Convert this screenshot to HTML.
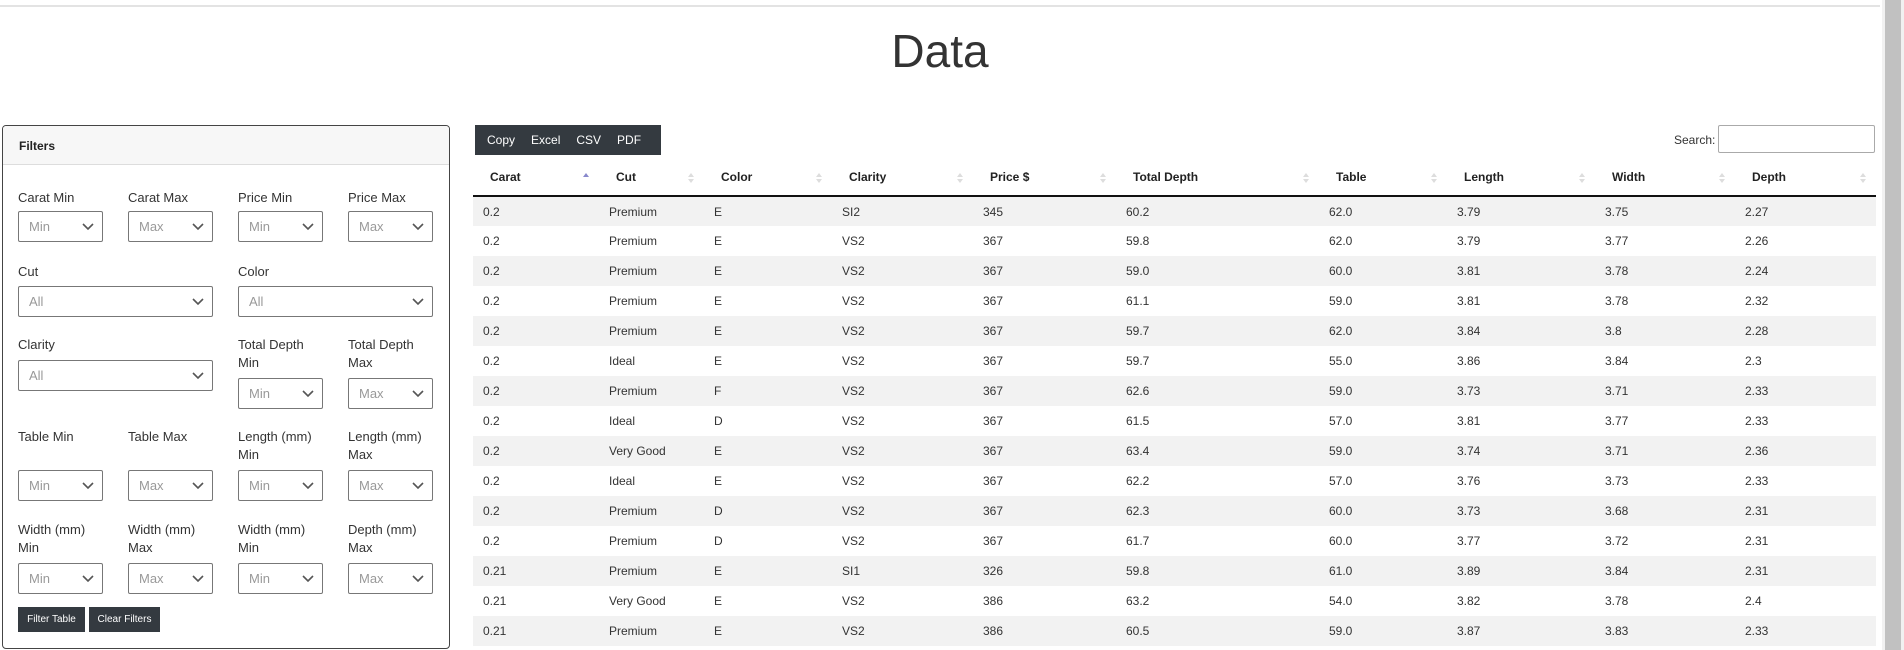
<!DOCTYPE html>
<html><head><meta charset="utf-8"><style>
*{box-sizing:border-box;margin:0;padding:0}
body{width:1904px;height:650px;overflow:hidden;background:#fff;font-family:"Liberation Sans",Arial,sans-serif;color:#212529;position:relative}
.topline{position:absolute;left:0;top:5px;width:1880px;height:2px;background:#e3e3e3}
.sb{position:absolute;right:0;top:0;width:22px;height:650px;background:#f1f1f1}
.sb div{position:absolute;left:3px;right:3px;top:0;bottom:0;background:#c1c1c1}
h1{position:absolute;left:0;width:1880px;top:24px;text-align:center;font-weight:400;font-size:46px;color:#333}
.card{position:absolute;left:2px;top:125px;width:448px;height:524px;border:1px solid #444;border-radius:4px;overflow:hidden}
.card .hd{height:39px;background:#f7f7f7;border-bottom:1px solid #ddd;font-weight:bold;font-size:12px;padding:13px 0 0 16px;color:#222}
.lbl{position:absolute;font-size:13px;line-height:18px;color:#333}
.sel{position:absolute;height:31px;border:1px solid #777;border-radius:2px;font-size:13px;color:#999;padding:7px 0 0 10px;background:#fff}
.sel svg{position:absolute;right:8px;top:11px}
.btn{position:absolute;background:#343a40;color:#fff;font-size:10px;height:25px;line-height:25px;text-align:center;white-space:nowrap}
.bar{position:absolute;left:475px;top:125px;width:186px;height:30px;background:#343a40;color:#fff;font-size:12px;line-height:30px;white-space:nowrap}
.bar span{margin-left:12px;margin-right:4px}
.search{position:absolute;left:1674px;top:133px;font-size:12px;color:#333}
.sinput{position:absolute;left:1718px;top:125px;width:157px;height:28px;border:1px solid #aaa;border-radius:2px}
table{position:absolute;left:473px;top:159px;width:1403px;border-collapse:collapse;font-size:12px;color:#333;table-layout:fixed}
th{text-align:left;font-weight:bold;height:37px;padding-left:17px;border-bottom:2px solid #111;position:relative;color:#222}
th i{position:absolute;right:10px;top:13px;width:6px;height:12px;font-style:normal}
td{height:30px;padding-left:10px}
tbody tr:nth-child(odd){background:#f2f2f2}
</style></head><body>
<div class="topline"></div>
<div class="sb"><div></div></div>
<h1>Data</h1>
<div class="card"><div class="hd">Filters</div></div>
<div class="lbl" style="left:18px;top:189px">Carat Min</div>
<div class="lbl" style="left:128px;top:189px">Carat Max</div>
<div class="lbl" style="left:238px;top:189px">Price Min</div>
<div class="lbl" style="left:348px;top:189px">Price Max</div>
<div class="lbl" style="left:18px;top:263px">Cut</div>
<div class="lbl" style="left:238px;top:263px">Color</div>
<div class="lbl" style="left:18px;top:336px">Clarity</div>
<div class="lbl" style="left:238px;top:336px">Total Depth<br>Min</div>
<div class="lbl" style="left:348px;top:336px">Total Depth<br>Max</div>
<div class="lbl" style="left:18px;top:428px">Table Min</div>
<div class="lbl" style="left:128px;top:428px">Table Max</div>
<div class="lbl" style="left:238px;top:428px">Length (mm)<br>Min</div>
<div class="lbl" style="left:348px;top:428px">Length (mm)<br>Max</div>
<div class="lbl" style="left:18px;top:521px">Width (mm)<br>Min</div>
<div class="lbl" style="left:128px;top:521px">Width (mm)<br>Max</div>
<div class="lbl" style="left:238px;top:521px">Width (mm)<br>Min</div>
<div class="lbl" style="left:348px;top:521px">Depth (mm)<br>Max</div>

<div class="sel" style="left:18px;top:211px;width:85px">Min<svg width="12" height="8"><path d="M1 1l5 5 5-5" stroke="#555" stroke-width="1.6" fill="none"/></svg></div>
<div class="sel" style="left:128px;top:211px;width:85px">Max<svg width="12" height="8"><path d="M1 1l5 5 5-5" stroke="#555" stroke-width="1.6" fill="none"/></svg></div>
<div class="sel" style="left:238px;top:211px;width:85px">Min<svg width="12" height="8"><path d="M1 1l5 5 5-5" stroke="#555" stroke-width="1.6" fill="none"/></svg></div>
<div class="sel" style="left:348px;top:211px;width:85px">Max<svg width="12" height="8"><path d="M1 1l5 5 5-5" stroke="#555" stroke-width="1.6" fill="none"/></svg></div>
<div class="sel" style="left:18px;top:286px;width:195px">All<svg width="12" height="8"><path d="M1 1l5 5 5-5" stroke="#555" stroke-width="1.6" fill="none"/></svg></div>
<div class="sel" style="left:238px;top:286px;width:195px">All<svg width="12" height="8"><path d="M1 1l5 5 5-5" stroke="#555" stroke-width="1.6" fill="none"/></svg></div>
<div class="sel" style="left:18px;top:360px;width:195px">All<svg width="12" height="8"><path d="M1 1l5 5 5-5" stroke="#555" stroke-width="1.6" fill="none"/></svg></div>
<div class="sel" style="left:238px;top:378px;width:85px">Min<svg width="12" height="8"><path d="M1 1l5 5 5-5" stroke="#555" stroke-width="1.6" fill="none"/></svg></div>
<div class="sel" style="left:348px;top:378px;width:85px">Max<svg width="12" height="8"><path d="M1 1l5 5 5-5" stroke="#555" stroke-width="1.6" fill="none"/></svg></div>
<div class="sel" style="left:18px;top:470px;width:85px">Min<svg width="12" height="8"><path d="M1 1l5 5 5-5" stroke="#555" stroke-width="1.6" fill="none"/></svg></div>
<div class="sel" style="left:128px;top:470px;width:85px">Max<svg width="12" height="8"><path d="M1 1l5 5 5-5" stroke="#555" stroke-width="1.6" fill="none"/></svg></div>
<div class="sel" style="left:238px;top:470px;width:85px">Min<svg width="12" height="8"><path d="M1 1l5 5 5-5" stroke="#555" stroke-width="1.6" fill="none"/></svg></div>
<div class="sel" style="left:348px;top:470px;width:85px">Max<svg width="12" height="8"><path d="M1 1l5 5 5-5" stroke="#555" stroke-width="1.6" fill="none"/></svg></div>
<div class="sel" style="left:18px;top:563px;width:85px">Min<svg width="12" height="8"><path d="M1 1l5 5 5-5" stroke="#555" stroke-width="1.6" fill="none"/></svg></div>
<div class="sel" style="left:128px;top:563px;width:85px">Max<svg width="12" height="8"><path d="M1 1l5 5 5-5" stroke="#555" stroke-width="1.6" fill="none"/></svg></div>
<div class="sel" style="left:238px;top:563px;width:85px">Min<svg width="12" height="8"><path d="M1 1l5 5 5-5" stroke="#555" stroke-width="1.6" fill="none"/></svg></div>
<div class="sel" style="left:348px;top:563px;width:85px">Max<svg width="12" height="8"><path d="M1 1l5 5 5-5" stroke="#555" stroke-width="1.6" fill="none"/></svg></div>
<div class="btn" style="left:18px;top:607px;width:67px">Filter Table</div>
<div class="btn" style="left:89px;top:607px;width:71px">Clear Filters</div>

<div class="bar"><span>Copy</span><span>Excel</span><span>CSV</span><span>PDF</span></div>
<div class="search">Search:</div>
<div class="sinput"></div>

<table>
<colgroup><col style="width:126px"><col style="width:105px"><col style="width:128px"><col style="width:141px"><col style="width:143px"><col style="width:203px"><col style="width:128px"><col style="width:148px"><col style="width:140px"><col style="width:141px"></colgroup>
<thead><tr>
<th>Carat<i><svg width="6" height="12"><path d="M0 5l3-4 3 4z" fill="#8888cc"/></svg></i></th>
<th>Cut<i><svg width="6" height="12"><path d="M0 5l3-4 3 4zM0 7l3 4 3-4z" fill="#ddd"/></svg></i></th>
<th>Color<i><svg width="6" height="12"><path d="M0 5l3-4 3 4zM0 7l3 4 3-4z" fill="#ddd"/></svg></i></th>
<th>Clarity<i><svg width="6" height="12"><path d="M0 5l3-4 3 4zM0 7l3 4 3-4z" fill="#ddd"/></svg></i></th>
<th>Price $<i><svg width="6" height="12"><path d="M0 5l3-4 3 4zM0 7l3 4 3-4z" fill="#ddd"/></svg></i></th>
<th>Total Depth<i><svg width="6" height="12"><path d="M0 5l3-4 3 4zM0 7l3 4 3-4z" fill="#ddd"/></svg></i></th>
<th>Table<i><svg width="6" height="12"><path d="M0 5l3-4 3 4zM0 7l3 4 3-4z" fill="#ddd"/></svg></i></th>
<th>Length<i><svg width="6" height="12"><path d="M0 5l3-4 3 4zM0 7l3 4 3-4z" fill="#ddd"/></svg></i></th>
<th>Width<i><svg width="6" height="12"><path d="M0 5l3-4 3 4zM0 7l3 4 3-4z" fill="#ddd"/></svg></i></th>
<th>Depth<i><svg width="6" height="12"><path d="M0 5l3-4 3 4zM0 7l3 4 3-4z" fill="#ddd"/></svg></i></th>
</tr></thead>
<tbody>
<tr><td>0.2</td><td>Premium</td><td>E</td><td>SI2</td><td>345</td><td>60.2</td><td>62.0</td><td>3.79</td><td>3.75</td><td>2.27</td></tr>
<tr><td>0.2</td><td>Premium</td><td>E</td><td>VS2</td><td>367</td><td>59.8</td><td>62.0</td><td>3.79</td><td>3.77</td><td>2.26</td></tr>
<tr><td>0.2</td><td>Premium</td><td>E</td><td>VS2</td><td>367</td><td>59.0</td><td>60.0</td><td>3.81</td><td>3.78</td><td>2.24</td></tr>
<tr><td>0.2</td><td>Premium</td><td>E</td><td>VS2</td><td>367</td><td>61.1</td><td>59.0</td><td>3.81</td><td>3.78</td><td>2.32</td></tr>
<tr><td>0.2</td><td>Premium</td><td>E</td><td>VS2</td><td>367</td><td>59.7</td><td>62.0</td><td>3.84</td><td>3.8</td><td>2.28</td></tr>
<tr><td>0.2</td><td>Ideal</td><td>E</td><td>VS2</td><td>367</td><td>59.7</td><td>55.0</td><td>3.86</td><td>3.84</td><td>2.3</td></tr>
<tr><td>0.2</td><td>Premium</td><td>F</td><td>VS2</td><td>367</td><td>62.6</td><td>59.0</td><td>3.73</td><td>3.71</td><td>2.33</td></tr>
<tr><td>0.2</td><td>Ideal</td><td>D</td><td>VS2</td><td>367</td><td>61.5</td><td>57.0</td><td>3.81</td><td>3.77</td><td>2.33</td></tr>
<tr><td>0.2</td><td>Very Good</td><td>E</td><td>VS2</td><td>367</td><td>63.4</td><td>59.0</td><td>3.74</td><td>3.71</td><td>2.36</td></tr>
<tr><td>0.2</td><td>Ideal</td><td>E</td><td>VS2</td><td>367</td><td>62.2</td><td>57.0</td><td>3.76</td><td>3.73</td><td>2.33</td></tr>
<tr><td>0.2</td><td>Premium</td><td>D</td><td>VS2</td><td>367</td><td>62.3</td><td>60.0</td><td>3.73</td><td>3.68</td><td>2.31</td></tr>
<tr><td>0.2</td><td>Premium</td><td>D</td><td>VS2</td><td>367</td><td>61.7</td><td>60.0</td><td>3.77</td><td>3.72</td><td>2.31</td></tr>
<tr><td>0.21</td><td>Premium</td><td>E</td><td>SI1</td><td>326</td><td>59.8</td><td>61.0</td><td>3.89</td><td>3.84</td><td>2.31</td></tr>
<tr><td>0.21</td><td>Very Good</td><td>E</td><td>VS2</td><td>386</td><td>63.2</td><td>54.0</td><td>3.82</td><td>3.78</td><td>2.4</td></tr>
<tr><td>0.21</td><td>Premium</td><td>E</td><td>VS2</td><td>386</td><td>60.5</td><td>59.0</td><td>3.87</td><td>3.83</td><td>2.33</td></tr>
</tbody></table>
</body></html>
